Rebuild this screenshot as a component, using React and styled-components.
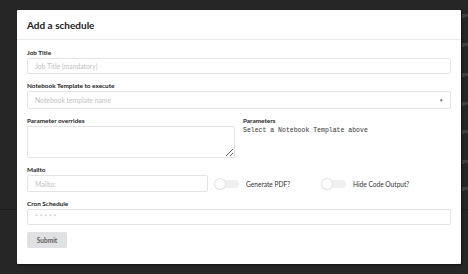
import React from 'react'
import styled, { createGlobalStyle } from 'styled-components';

const GlobalStyle = createGlobalStyle`
  html, body {
    margin: 0;
    padding: 0;
    background: #262626;
    font-family: Lato, "Open Sans", "Liberation Sans", sans-serif;
  }
  * { box-sizing: border-box; }
`;

const rows = [28, 30, 31, 26, 30, 31, 22, 12];

const App = () => {
  return (
    <Page>
      <GlobalStyle />
      <Backdrop>
        {rows.map((h, i) => (
          <BackRow key={i} h={h} last={i === rows.length - 1}>
            {i < rows.length - 1 ? 'ge' : ''}
          </BackRow>
        ))}
      </Backdrop>
      <Dimmer>
        <Modal>
          <Header>Add a schedule</Header>
          <Content>
            <Field>
              <Label>Job Title</Label>
              <Input placeholder="Job Title (mandatory)" />
            </Field>
            <Field>
              <Label>Notebook Template to execute</Label>
              <Select>
                <span>Notebook template name</span>
                <Caret>▾</Caret>
              </Select>
            </Field>
            <TwoCols>
              <Field>
                <Label>Parameter overrides</Label>
                <TextArea />
              </Field>
              <Field>
                <Label>Parameters</Label>
                <Mono>Select a Notebook Template above</Mono>
              </Field>
            </TwoCols>
            <MailRow>
              <Field w={181}>
                <Label>Mailto</Label>
                <Input placeholder="Mailto:" h={17} />
              </Field>
              <ToggleField w={100}>
                <Track />
                <span>Generate PDF?</span>
              </ToggleField>
              <ToggleField>
                <Track />
                <span>Hide Code Output?</span>
              </ToggleField>
            </MailRow>
            <Field>
              <Label>Cron Schedule</Label>
              <Input placeholder="* * * * *" />
            </Field>
            <Button>Submit</Button>
          </Content>
        </Modal>
      </Dimmer>
    </Page>
  )
}

export default App;

const Page = styled.div`
  position: relative;
  width: 468px;
  height: 274px;
  overflow: hidden;
  background: #262626;
`;

const Backdrop = styled.div`
  display: flex;
  flex-direction: column;
`;

const BackRow = styled.div`
  height: ${p => p.h}px;
  display: flex;
  align-items: center;
  justify-content: flex-end;
  padding-right: 0;
  font-size: 6px;
  color: #5c5c5c;
  border-bottom: ${p => (p.last ? '1px solid #1c1c1c' : 'none')};
`;

const Dimmer = styled.div`
  position: absolute;
  inset: 0;
  padding: 10px 0 0 17px;
`;

const Modal = styled.div`
  width: 444px;
  height: 254px;
  background: #fff;
  border-radius: 1px;
  box-shadow: 1px 1px 2px rgba(0, 0, 0, 0.6);
  display: flex;
  flex-direction: column;
`;

const Header = styled.div`
  height: 30px;
  padding: 0 10px;
  display: flex;
  align-items: center;
  font-size: 10px;
  font-weight: 700;
  color: #222;
  border-bottom: 1px solid #ececec;
`;

const Content = styled.div`
  padding: 9px 10px 0;
  display: flex;
  flex-direction: column;
  gap: 8px;
`;

const Field = styled.div`
  display: flex;
  flex-direction: column;
  gap: 1px;
  width: ${p => (p.w ? `${p.w}px` : 'auto')};
  min-width: 0;
`;

const Label = styled.label`
  font-size: 6.4px;
  line-height: 8px;
  font-weight: 700;
  color: #222;
`;

const Input = styled.input`
  height: ${p => p.h || 16}px;
  width: 100%;
  margin: 0;
  padding: 0 7px;
  border: 1px solid #e4e4e4;
  border-radius: 2px;
  font-family: inherit;
  font-size: 6.8px;
  color: #333;
  outline: none;
  &::placeholder {
    color: #c2c2c2;
  }
`;

const Select = styled.div`
  height: 18px;
  padding: 0 7px;
  border: 1px solid #e4e4e4;
  border-radius: 2px;
  display: flex;
  align-items: center;
  justify-content: space-between;
  font-size: 6.8px;
  color: #c2c2c2;
`;

const Caret = styled.span`
  color: #555;
  font-size: 5px;
`;

const TwoCols = styled.div`
  display: grid;
  grid-template-columns: 1fr 1fr;
  gap: 8px;
`;

const TextArea = styled.textarea`
  height: 32px;
  width: 100%;
  margin: 0;
  border: 1px solid #e4e4e4;
  border-radius: 2px;
  font-family: inherit;
  font-size: 6.8px;
  outline: none;
`;

const Mono = styled.div`
  font-family: "Liberation Mono", "DejaVu Sans Mono", monospace;
  font-size: 6.5px;
  line-height: 9px;
  color: #333;
`;

const MailRow = styled.div`
  display: flex;
  align-items: flex-end;
  gap: 7px;
`;

const ToggleField = styled.div`
  width: ${p => (p.w ? `${p.w}px` : 'auto')};
  height: 17px;
  display: flex;
  align-items: center;
  gap: 7px;
  font-size: 6.6px;
  color: #333;
`;

const Track = styled.span`
  position: relative;
  width: 24px;
  height: 8px;
  border-radius: 5px;
  background: #f0f0f0;
  &::before {
    content: '';
    position: absolute;
    left: 0;
    top: -1px;
    width: 10px;
    height: 10px;
    border-radius: 50%;
    background: #fff;
    box-shadow: 0 0 0 1px #e2e2e2, 0 1px 1px rgba(0, 0, 0, 0.12);
  }
`;

const Button = styled.button`
  align-self: flex-start;
  width: 40px;
  height: 16px;
  margin-top: -1px;
  padding: 0;
  border: none;
  border-radius: 2px;
  background: #e0e1e2;
  color: #5f5f5f;
  font-family: inherit;
  font-size: 6.6px;
  font-weight: 700;
`;
